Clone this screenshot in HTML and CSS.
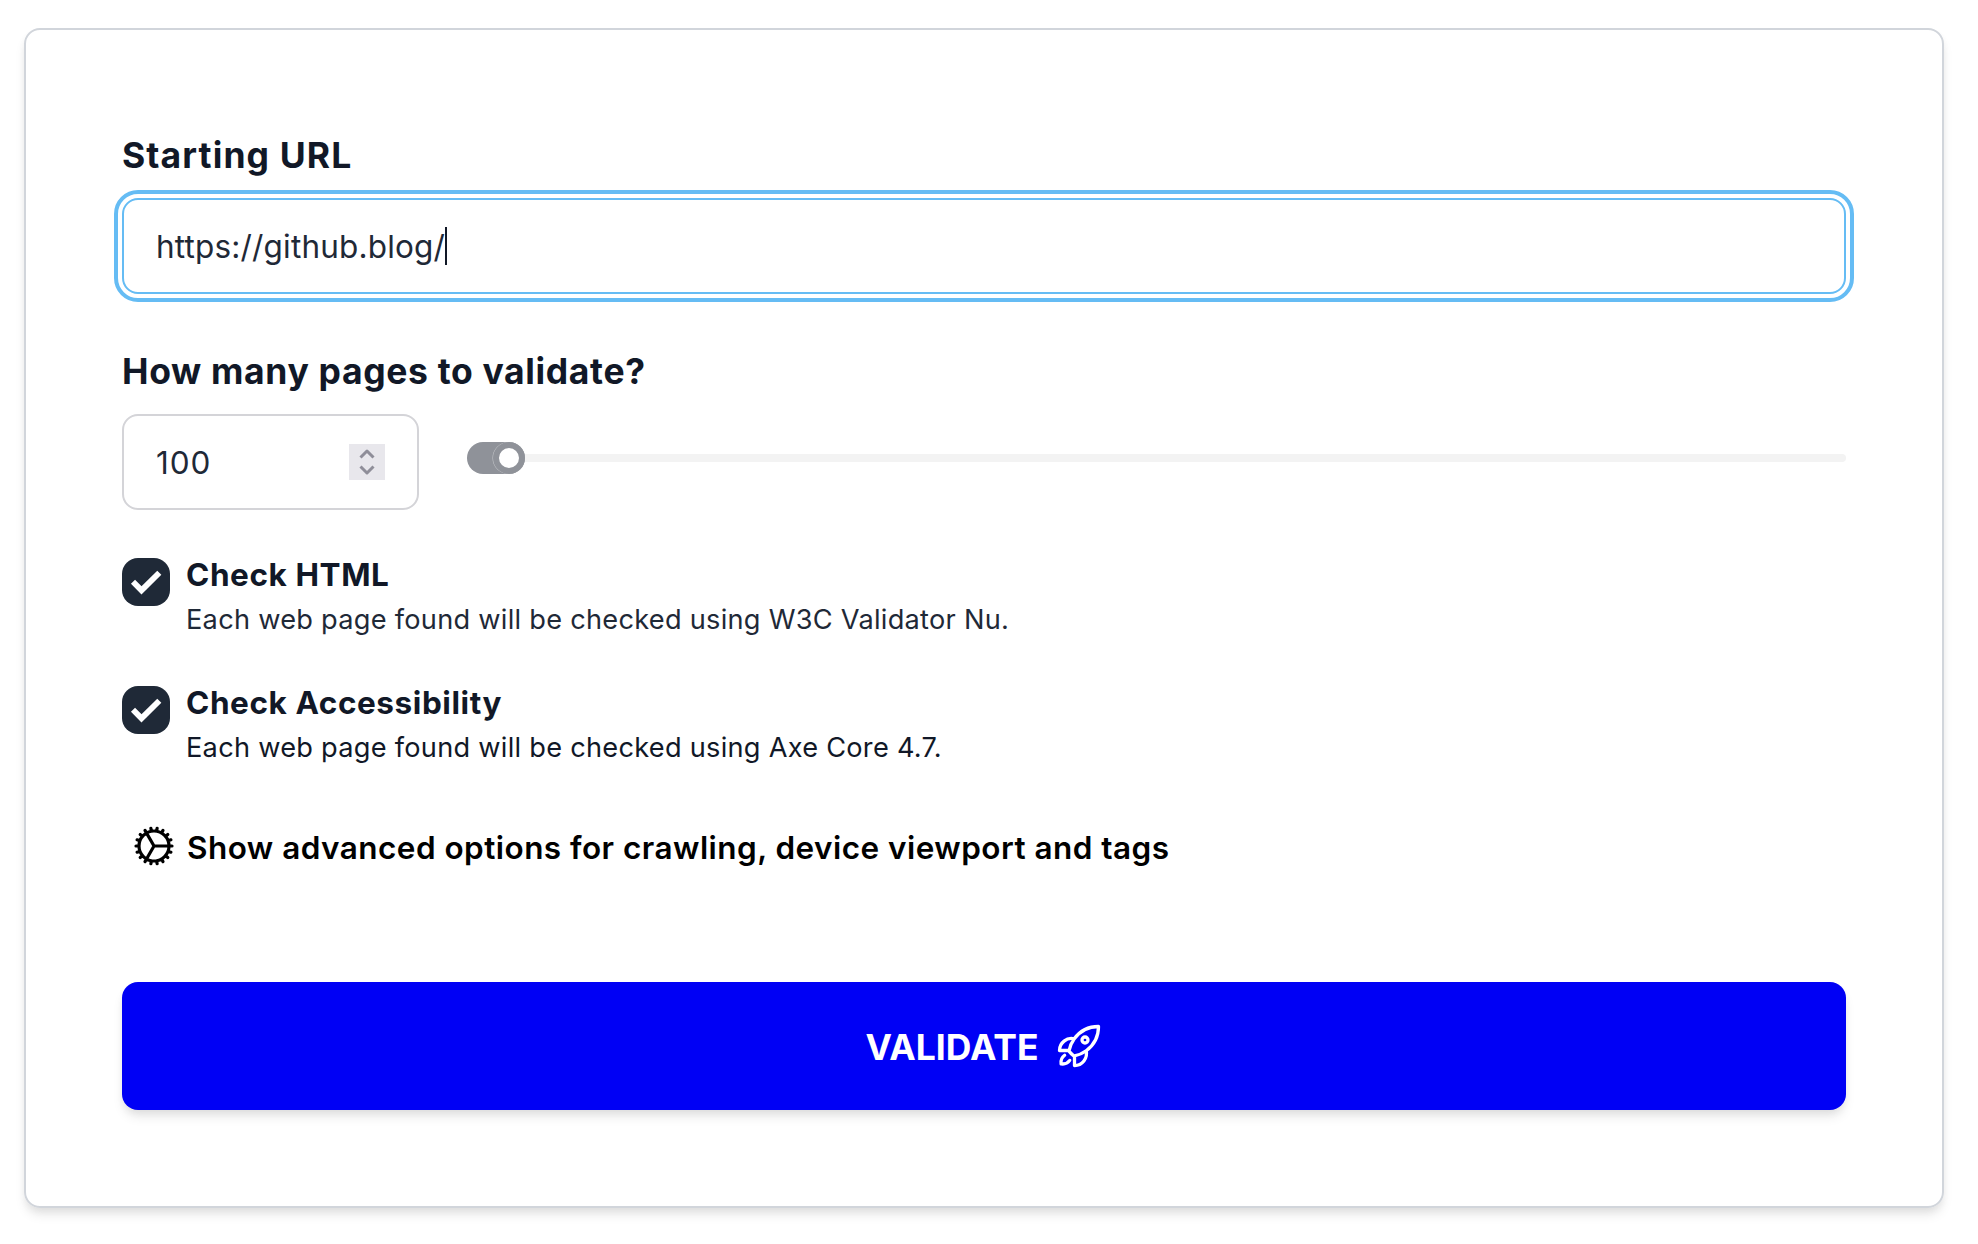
FILE: index.html
```html
<!DOCTYPE html>
<html lang="en">
<head>
<meta charset="utf-8">
<title>Validate a site</title>
<link rel="stylesheet" href="styles.css">
</head>
<body>
<form class="card">
  <label class="label label-url"><span class="text">Starting URL</span></label>
  <div class="field field-url"><span class="url">https://github.blog/</span><span class="caret"></span></div>
  <label class="label label-pages"><span class="text">How many pages to validate?</span></label>
  <div class="pages">
    <div class="field field-number"><span class="number">100</span>
      <span class="spinner"><svg viewBox="0 0 36 36" width="36" height="36"><path d="M11.500 13.500 18 7l6.500 6.500M11.500 22.500 18 29l6.500-6.500"/></svg></span>
    </div>
    <div class="slider"><span class="fill"><span class="thumb"></span></span><span class="track"></span></div>
  </div>
  <div class="option">
    <span class="check"><svg viewBox="0 0 48 48" width="48" height="48"><path d="M11 23.800 19.500 32.300 37.300 14.700"/></svg></span>
    <div class="copy"><div class="title">Check HTML</div><div class="desc">Each web page found will be checked using W3C Validator Nu.</div></div>
  </div>
  <div class="option">
    <span class="check"><svg viewBox="0 0 48 48" width="48" height="48"><path d="M11 23.800 19.500 32.300 37.300 14.700"/></svg></span>
    <div class="copy"><div class="title">Check Accessibility</div><div class="desc desc-dark">Each web page found will be checked using Axe Core 4.7.</div></div>
  </div>
  <div class="advanced">
    <svg class="gear" viewBox="0 0 24 24" width="48" height="48"><path d="M4.500 12a7.500 7.500 0 0015 0m-15 0a7.500 7.500 0 1115 0m-15 0H3m16.500 0H21m-1.500 0H12m-8.457 3.077l1.410-.513m14.095-5.130l1.410-.513M5.106 17.785l1.150-.964m11.490-9.642l1.149-.964M7.501 19.795l.750-1.300m7.500-12.990l.750-1.300m-6.063 16.658l.260-1.477m2.605-14.772l.260-1.477m0 17.726l-.260-1.477M10.698 4.614l-.260-1.477M16.500 19.794l-.750-1.299M7.500 4.205L12 12m6.894 5.785l-1.149-.964M6.256 7.178l-1.150-.964m15.352 8.864l-1.410-.513M4.954 9.435l-1.410-.514M12.002 12l-3.750 6.495"/></svg>
    <span class="advanced-text">Show advanced options for crawling, device viewport and tags</span>
  </div>
  <div class="button"><span class="button-text">VALIDATE</span>
    <svg class="rocket" viewBox="0 0 24 24" width="48" height="48"><path d="M15.590 14.370a6 6 0 01-5.840 7.380v-4.800m5.840-2.580a14.980 14.980 0 006.160-12.120A14.980 14.980 0 009.631 8.410m5.960 5.960a14.926 14.926 0 01-5.841 2.580m-.119-8.540a6 6 0 00-7.381 5.840h4.800m2.581-5.840a14.927 14.927 0 00-2.580 5.840m2.699 2.700c-.103.021-.207.041-.311.060a15.090 15.090 0 01-2.448-2.448 14.900 14.900 0 01.060-.312m-2.240 2.390a4.493 4.493 0 00-1.757 4.306 4.493 4.493 0 004.306-1.758M16.500 9a1.500 1.500 0 11-3 0 1.500 1.500 0 013 0z"/></svg>
  </div>
</form>
</body>
</html>
```
FILE: styles.css
```css
* { box-sizing: border-box; }
body { margin: 0; padding: 28px 34px 36px 24px; background: #fff; color: #111827; font-family: Inter, "Liberation Sans", sans-serif; }
svg { display: block; flex: none; fill: none; stroke: currentColor; stroke-linecap: round; stroke-linejoin: round; }
.card { display: flex; flex-direction: column; width: 1920px; height: 1180px; padding: 96px; border: 2px solid #d1d5db; border-radius: 16px; box-shadow: 0 8px 12px -2px rgba(0,0,0,.1), 0 4px 8px -2px rgba(0,0,0,.06); white-space: nowrap; }
.label { height: 56px; padding-top: 2px; font-size: 35.5px; line-height: 56px; font-weight: 700; letter-spacing: .65px; }
.label-url { letter-spacing: 1.1px; }
.field { display: flex; align-items: center; height: 96px; border: 2px solid #d4d4d8; border-radius: 16px; padding: 0 32px; font-size: 31.5px; color: #1f2937; }
.field-url { margin-top: 16px; border-color: #65bcf4; outline: 4px solid #65bcf4; outline-offset: 4px; letter-spacing: .18px; }
.caret { width: 2px; height: 38px; background: #111827; }
.label-pages { margin-top: 48px; }
.pages { display: flex; margin-top: 16px; gap: 48px; }
.field-number { width: 297px; justify-content: space-between; }
.number { padding-top: 1px; letter-spacing: .9px; }
.spinner { width: 36px; height: 36px; background: #e8e7ec; color: #8f8e99; }
.spinner path { stroke-width: 3; stroke-linecap: butt; }
.slider { flex: 1; display: flex; align-items: center; height: 32px; margin-top: 28px; }
.fill { display: flex; justify-content: flex-end; width: 58px; height: 32px; border-radius: 16px; background: #8f9299; }
.thumb { width: 32px; height: 32px; border-radius: 50%; border: 6px solid #8f9299; background: #fff; box-shadow: -.5px 0 0 0 rgba(255,255,255,.5); }
.track { flex: 1; height: 8px; background: #f3f3f3; border-radius: 0 4px 4px 0; }
.option { display: flex; gap: 16px; height: 80px; margin-top: 48px; }
.check { width: 48px; height: 48px; border-radius: 16px; background: #1f2937; color: #fff; }
.check path { stroke-width: 5.800; stroke-linecap: butt; stroke-linejoin: miter; }
.title { margin-top: -3px; font-size: 31.5px; font-weight: 700; line-height: 40px; letter-spacing: .58px; }
.desc { margin-top: 5px; font-size: 27.2px; line-height: 40px; letter-spacing: .26px; color: #1f2937; }
.desc-dark { color: #111827; }
.advanced { display: flex; align-items: center; gap: 9px; height: 48px; margin: 56px 0 0 8px; color: #000; font-size: 31.5px; font-weight: 600; letter-spacing: .46px; }
.advanced-text, .button-text { padding-top: 2px; }
.gear { stroke-width: 1.600; }
.button { display: flex; align-items: center; justify-content: center; gap: 16px; height: 128px; margin-top: 112px; border-radius: 16px; background: #0000f5; color: #fff; font-size: 35.5px; font-weight: 700; box-shadow: 0 8px 12px -2px rgba(0,0,0,.1), 0 4px 8px -2px rgba(0,0,0,.06); }
.rocket { stroke-width: 1.650; }
```
